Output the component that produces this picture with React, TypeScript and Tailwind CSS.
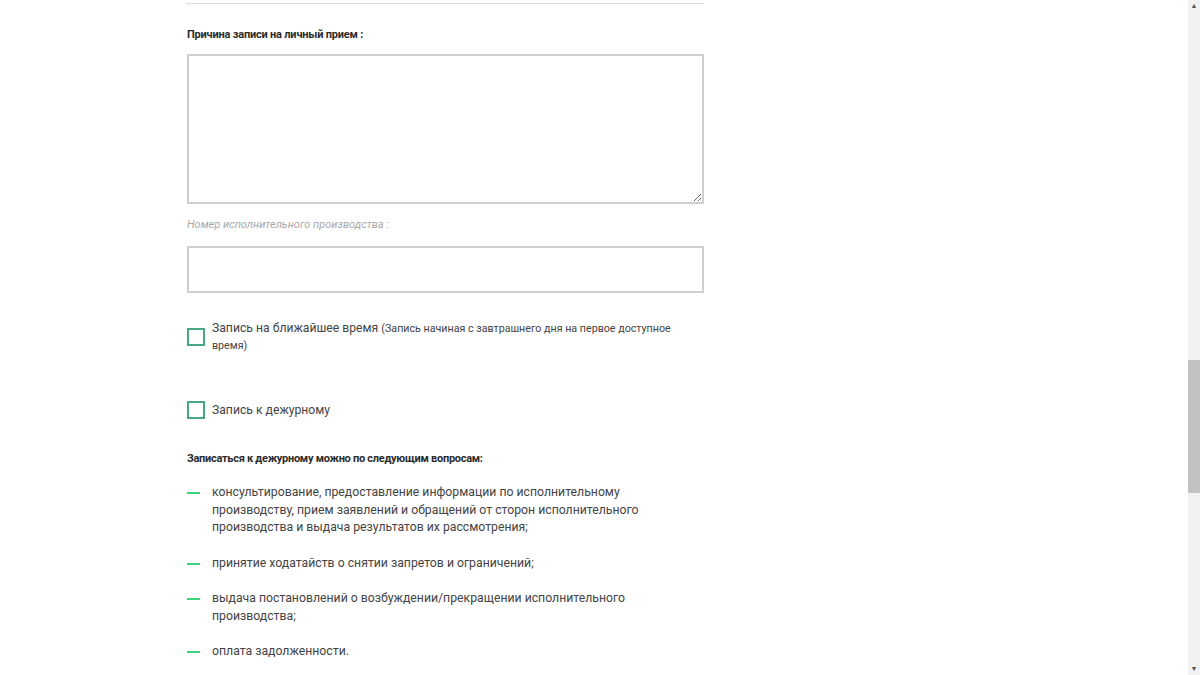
import React from "react";

const items = [
  "консультирование, предоставление информации по исполнительному производству, прием заявлений и обращений от сторон исполнительного производства и выдача результатов их рассмотрения;",
  "принятие ходатайств о снятии запретов и ограничений;",
  "выдача постановлений о возбуждении/прекращении исполнительного производства;",
  "оплата задолженности.",
];

const Checkbox = () => (
  <span className="block w-[18px] h-[18px] shrink-0 border-2 border-[#47a87f] bg-white" />
);

const App = () => {
  return (
    <div className="flex h-[675px] w-[1200px] overflow-hidden bg-white font-['Roboto',sans-serif] text-[#333]">
      <div className="flex-1">
        <div className="ml-[186px] w-[518px] pt-[3px]">
          <div className="border-t border-[#dcdcdc]" />
          <div className="pl-px">
            <h3 className="mt-[23px] text-[11px] leading-4 font-bold tracking-[-0.2px] text-[#2b2b2b]">
              Причина записи на личный прием :
            </h3>
            <textarea className="mt-[11px] block h-[150px] w-[517px] resize-y border-2 border-[#cfcfcf] bg-white" />
            <p className="mt-[13px] text-[11px] leading-4 italic text-[#a8a8a8]">
              Номер исполнительного производства :
            </p>
            <input
              type="text"
              className="mt-[13px] block h-[47px] w-[517px] border-2 border-[#cfcfcf] bg-white"
            />

            <label className="mt-[27px] flex items-center gap-[7px]">
              <Checkbox />
              <span className="text-[12.2px] leading-[17px] text-[#444]">
                Запись на ближайшее время{" "}
                <span className="text-[10.7px] leading-[17px]">
                  (Запись начиная с завтрашнего дня на первое доступное время)
                </span>
              </span>
            </label>

            <label className="mt-[47px] flex items-center gap-[7px]">
              <Checkbox />
              <span className="text-[12.2px] leading-[18px] text-[#444]">
                Запись к дежурному
              </span>
            </label>

            <h3 className="mt-[32px] text-[11px] leading-4 font-bold tracking-[-0.28px] text-[#2b2b2b]">
              Записаться к дежурному можно по следующим вопросам:
            </h3>

            <ul className="mt-[17px] flex flex-col gap-[18px]">
              {items.map((item, index) => (
                <li key={index} className="flex">
                  <span className="mt-[8px] mr-[12px] h-[2px] w-[13px] shrink-0 bg-[#3fd07a]" />
                  <span className="w-[450px] text-[12.25px] leading-[17.5px] text-[#444]">
                    {item}
                  </span>
                </li>
              ))}
            </ul>
          </div>
        </div>
      </div>

      {/* fake scrollbar */}
      <div className="flex w-[12px] flex-col bg-[#f1f1f1]">
        <div className="flex h-[12px] items-center justify-center text-[7px] leading-none text-[#505050]">
          ▲
        </div>
        <div className="mt-[348px] h-[133px] bg-[#c1c1c1]" />
        <div className="flex-1" />
        <div className="flex h-[12px] items-center justify-center text-[7px] leading-none text-[#505050]">
          ▼
        </div>
      </div>
    </div>
  );
};

export default App;
